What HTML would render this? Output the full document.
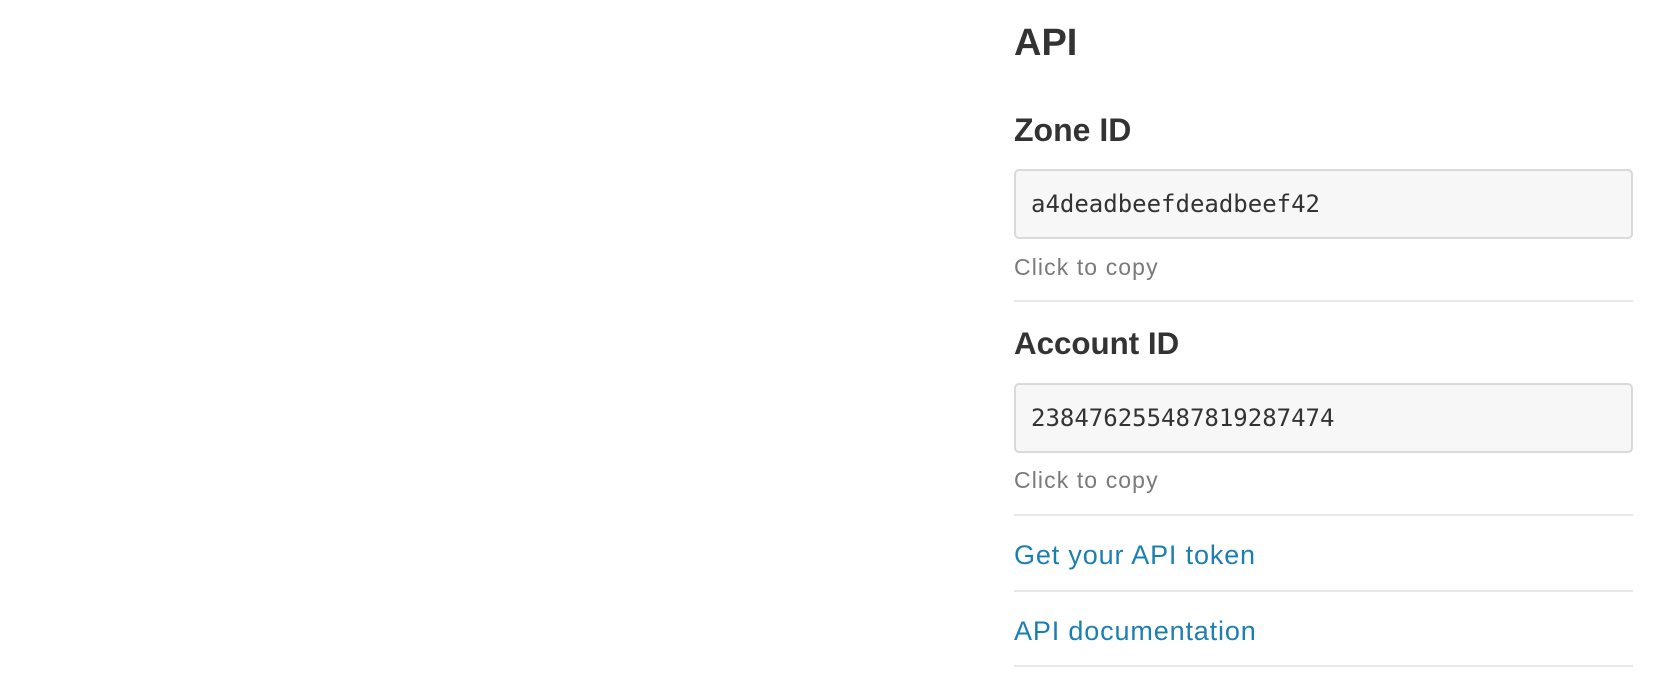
<!DOCTYPE html>
<html><head><meta charset="utf-8"><style>
html,body{margin:0;padding:0;background:#fff;width:1672px;height:696px;overflow:hidden}
.a{position:absolute;left:1014px;line-height:1;white-space:nowrap;font-family:"Liberation Sans",Helvetica,Arial,sans-serif}
.h{color:#333;font-weight:bold}
.g{color:#7a7a7a;font-size:23px;letter-spacing:1.1px}
.l{color:#1c7fb3;font-size:27px;letter-spacing:0.85px}
.hr{position:absolute;left:1014px;width:619px;height:2px;background:#e8e8e8}
.in{position:absolute;left:1014px;width:615px;height:66px;border:2px solid #d9d9d9;border-radius:5px;background:#f7f7f7}
.in span{position:absolute;left:15px;top:21px;font-family:"DejaVu Sans Mono","Liberation Mono",monospace;font-size:24px;line-height:1;color:#333}
</style></head><body>
<div class="a h" style="top:24px;font-size:38px">API</div>
<div class="a h" style="top:114px;font-size:32px">Zone ID</div>
<div class="in" style="top:169px"><span>a4deadbeefdeadbeef42</span></div>
<div class="a g" style="top:256px">Click to copy</div>
<div class="hr" style="top:300px"></div>
<div class="a h" style="top:328px;font-size:31.3px">Account ID</div>
<div class="in" style="top:383px"><span>238476255487819287474</span></div>
<div class="a g" style="top:469px">Click to copy</div>
<div class="hr" style="top:514px"></div>
<div class="a l" style="top:542px">Get your API token</div>
<div class="hr" style="top:590px"></div>
<div class="a l" style="top:618px">API documentation</div>
<div class="hr" style="top:665px"></div>
</body></html>
